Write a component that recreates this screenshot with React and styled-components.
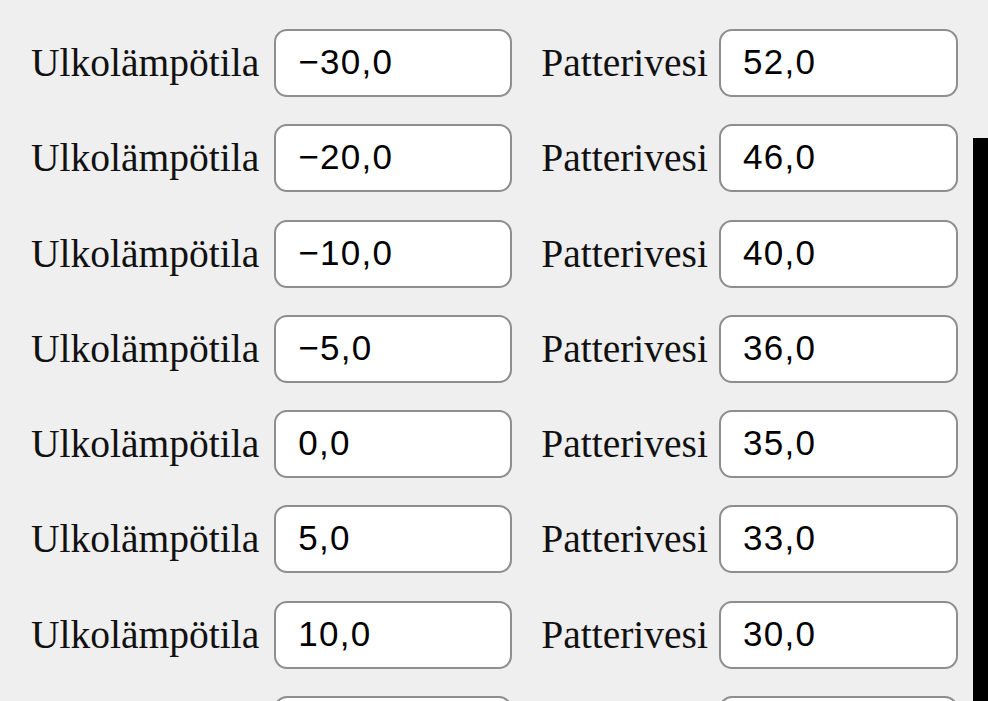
import React from "react";
import styled, { createGlobalStyle } from "styled-components";

const GlobalStyle = createGlobalStyle`
  html, body {
    margin: 0;
    padding: 0;
    background: #efefef;
    overflow: hidden;
  }
`;

const Page = styled.div`
  display: flex;
  width: 988px;
  height: 701px;
  overflow: hidden;
`;
const Form = styled.div`
  flex: 1;
  display: flex;
  flex-direction: column;
  gap: 27.3px;
  padding: 29px 0 0 31px;
`;
const Row = styled.div`
  display: flex;
  align-items: center;
  flex-shrink: 0;
  height: 68px;
`;
const Field = styled.label`
  display: flex;
  align-items: center;
  gap: ${(p) => p.$inner}px;
  margin-right: ${(p) => p.$gap || 0}px;
`;
const Label = styled.span`
  font-family: "Liberation Serif", "Times New Roman", serif;
  font-size: 39.5px;
  color: #111;
  white-space: nowrap;
`;
const Input = styled.div`
  box-sizing: border-box;
  width: ${(p) => p.$width}px;
  height: 68px;
  border: 2.5px solid #8e8e8e;
  border-radius: 13px;
  background: #fff;
  display: flex;
  align-items: center;
  padding: 0 0 2px 22px;
  font-family: "Liberation Sans", Arial, sans-serif;
  font-size: 35px;
  letter-spacing: 1.3px;
  color: #000;
`;
const Rail = styled.div`
  width: 15px;
  display: flex;
  flex-direction: column;
`;
const Thumb = styled.div`
  margin-top: 138px;
  flex: 1;
  background: #000;
`;

const rows = [
  ["\u221230,0", "52,0"],
  ["\u221220,0", "46,0"],
  ["\u221210,0", "40,0"],
  ["\u22125,0", "36,0"],
  ["0,0", "35,0"],
  ["5,0", "33,0"],
  ["10,0", "30,0"],
  ["", ""],
];

export default function App() {
  return (
    <Page>
      <GlobalStyle />
      <Form>
        {rows.map(([outside, water], i) => (
          <Row key={i}>
            <Field $inner={15} $gap={29}>
              <Label>Ulkolämpötila</Label>
              <Input $width={238}>{outside}</Input>
            </Field>
            <Field $inner={11}>
              <Label>Patterivesi</Label>
              <Input $width={239}>{water}</Input>
            </Field>
          </Row>
        ))}
      </Form>
      <Rail>
        <Thumb />
      </Rail>
    </Page>
  );
}
